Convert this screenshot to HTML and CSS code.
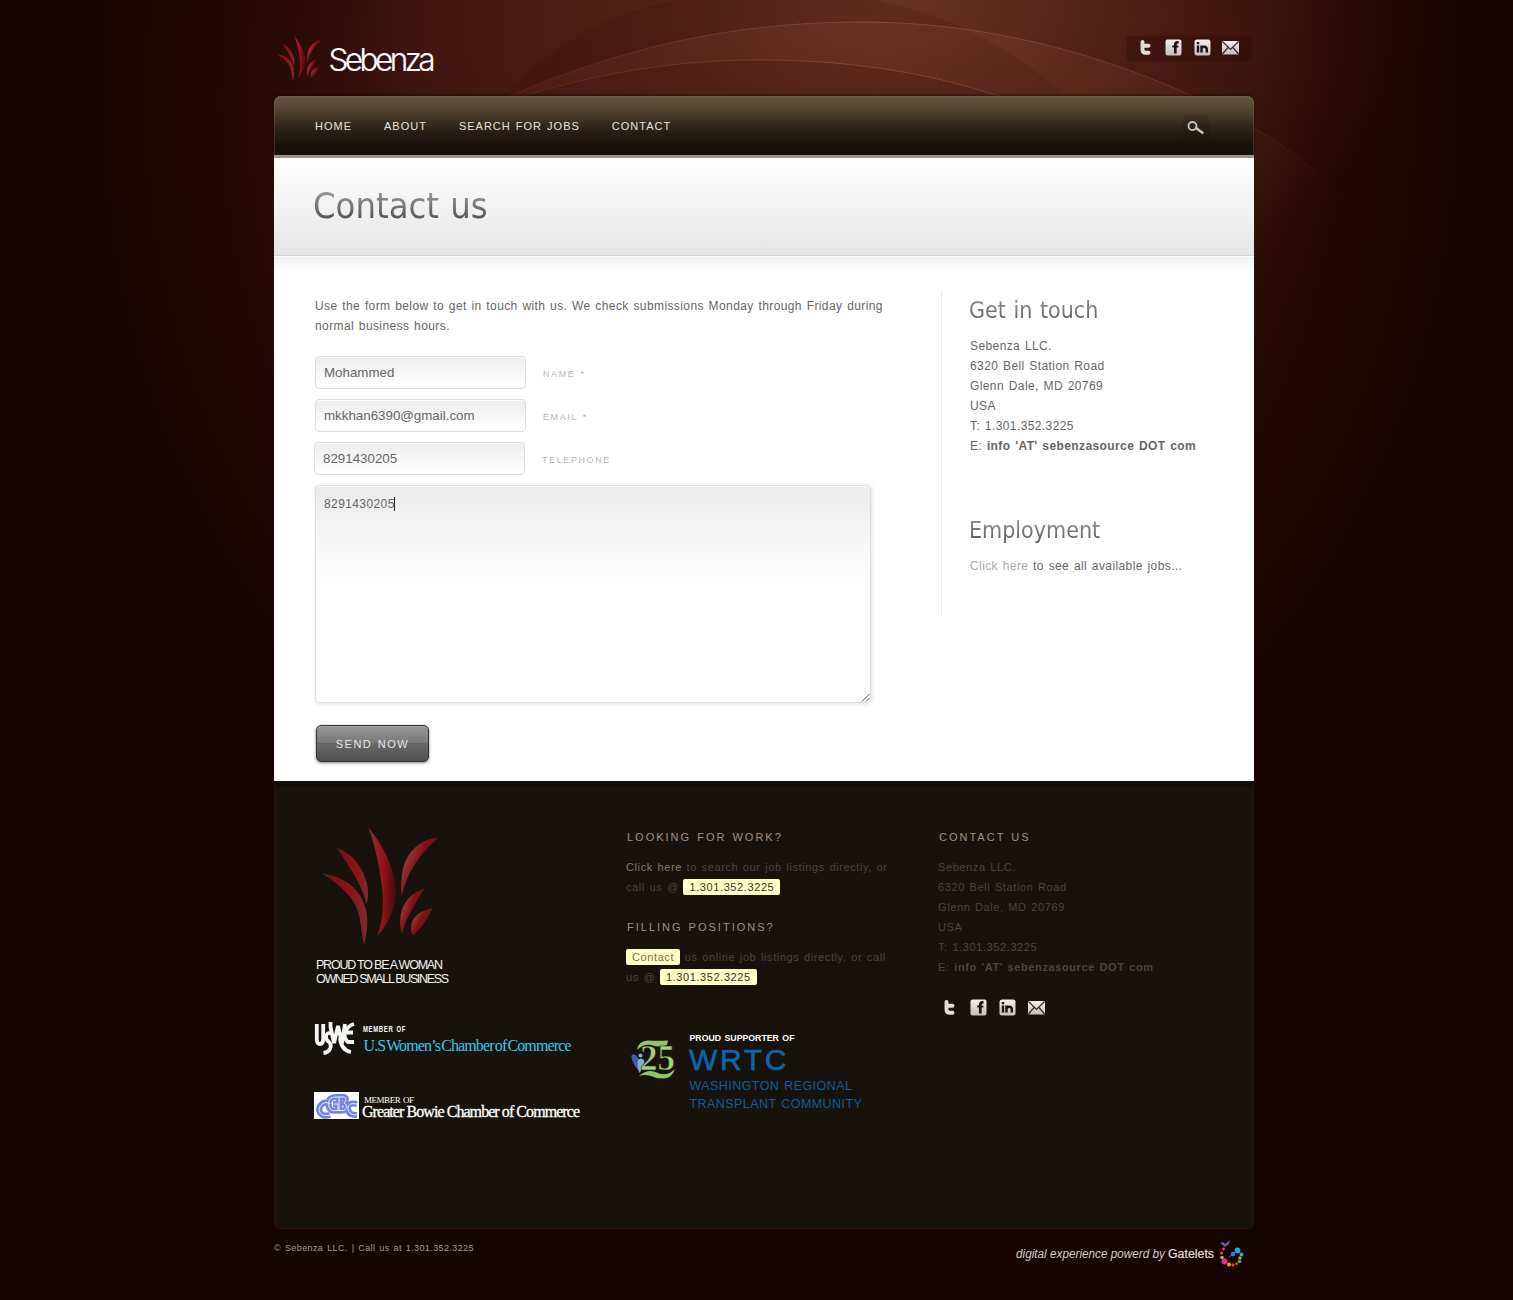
FILE: index.html
```html
<!DOCTYPE html>
<html lang="en">
<head>
<meta charset="utf-8">
<title>Contact us | Sebenza</title>
<link rel="stylesheet" href="styles.css">
</head>
<body>
<svg width="0" height="0" class="defs" aria-hidden="true">
  <defs>
    <linearGradient id="leafRed" x1="0" y1="0" x2="1" y2="0"><stop offset="0" stop-color="#6d1518"/><stop offset=".6" stop-color="#8c1216"/><stop offset="1" stop-color="#7d2a2e"/></linearGradient>
    <linearGradient id="leafBig" x1="0" y1="0" x2="1" y2=".1"><stop offset=".1" stop-color="#8d2a2e"/><stop offset=".6" stop-color="#941216"/><stop offset=".95" stop-color="#4d0e10"/></linearGradient>
    <linearGradient id="leafPale" x1="0" y1="0" x2="1" y2=".7"><stop offset=".15" stop-color="#a0484c"/><stop offset=".5" stop-color="#801115"/><stop offset="1" stop-color="#6c1013"/></linearGradient>
    <linearGradient id="metal" x1="0" y1="0" x2="0" y2="1"><stop offset="0" stop-color="#f4efee"/><stop offset="1" stop-color="#c6bebd"/></linearGradient>
    <symbol id="leaves" viewBox="60 30 360 362">
      <path fill="url(#leafRed)" d="M65 175C105 198 152 235 170 278C184 315 184 355 192 387C203 350 207 305 192 265C175 215 125 182 65 175Z"/>
      <path fill="url(#leafRed)" d="M110 97C155 115 183 150 196 190C206 215 206 245 200 267C184 205 148 155 110 97Z"/>
      <path fill="url(#leafBig)" d="M205 37C250 90 285 160 288 225C288 280 265 325 232 362C250 310 252 260 245 210C237 150 225 90 205 37Z"/>
      <path fill="url(#leafPale)" d="M415 68C370 70 330 100 312 150C303 180 302 215 305 245C318 180 355 118 415 68Z"/>
      <path fill="url(#leafPale)" d="M373 220C335 232 308 262 302 300C299 325 302 345 306 357C318 310 345 265 373 220Z"/>
      <path fill="url(#leafPale)" d="M397 280C360 285 338 305 334 330C332 345 335 352 338 360C360 345 380 315 397 280Z"/>
    </symbol>
    <symbol id="twitter" viewBox="0 0 17 17"><path d="M5.500 3V10.500Q5.500 13.800 9 13.800H11.500M6 6.800H11.500" fill="none" stroke="#e2dcdb" stroke-width="3.900" stroke-linecap="round" stroke-linejoin="round"/></symbol>
    <symbol id="facebook" viewBox="0 0 17 17"><rect x=".5" y=".5" width="16" height="16" rx="2" fill="url(#metal)"/><path d="M13.500 3.300H12.500Q10.300 3.300 10.300 6V14.500" fill="none" stroke="#21120f" stroke-width="2.700"/><path d="M7.300 7.500H13.300" stroke="#21120f" stroke-width="2"/></symbol>
    <symbol id="linkedin" viewBox="0 0 17 17"><rect x=".5" y=".5" width="16" height="16" rx="2.500" fill="url(#metal)"/><path d="M4 6.500V13.500M7.500 6.500V13.500M7.800 9.500Q8 7.700 10.200 7.700T12.800 10V13.500M4 3V5.300" fill="none" stroke="#21120f" stroke-width="2.400"/></symbol>
    <symbol id="mail" viewBox="0 0 17 17"><rect x="0" y="2" width="17" height="13.500" rx="1" fill="url(#metal)"/><path d="M.5 2.500L8.500 10.500L16.500 2.500M.5 15L6 8.500M16.500 15L11 8.500" fill="none" stroke="#3a2825" stroke-width="1.200"/></symbol>
  </defs>
</svg>

<svg class="backdrop" width="1513" height="900" viewBox="0 0 1513 900" aria-hidden="true">
  <defs>
    <radialGradient id="glow" cx="880" cy="20" r="500" gradientUnits="userSpaceOnUse"><stop offset="0" stop-color="#ff9c70" stop-opacity=".07"/><stop offset=".6" stop-color="#ff9c70" stop-opacity=".06"/><stop offset="1" stop-color="#ff8c60" stop-opacity="0"/></radialGradient>
    <linearGradient id="edge" x1="480" y1="0" x2="1370" y2="0" gradientUnits="userSpaceOnUse"><stop offset="0" stop-color="#c87858" stop-opacity=".1"/><stop offset=".45" stop-color="#c87858" stop-opacity=".36"/><stop offset=".8" stop-color="#c87858" stop-opacity=".22"/><stop offset="1" stop-color="#c87858" stop-opacity="0"/></linearGradient>
  </defs>
  <path fill="#2c0906" fill-opacity=".15" d="M490 110C560 30 650-10 770-10C900-10 1000 30 1080 110Z"/>
  <path fill="url(#glow)" d="M490 105C620 45 740 22 862 22C1010 22 1150 68 1254 128C1330 172 1400 250 1440 360V560H490Z"/>
  <path fill="none" stroke="url(#edge)" d="M490 105C620 45 740 22 862 22C1010 22 1150 68 1254 128C1330 172 1370 225 1400 270"/>
  <path fill="#2c0906" fill-opacity=".15" stroke="url(#edge)" d="M510 100C600 72 680 59 770 60C860 61 940 75 1010 100Z"/>
</svg>

<div class="page">
  <header class="top">
    <svg class="logo" width="180" height="56" viewBox="0 0 180 56" role="img" aria-label="Sebenza">
      <use href="#leaves" x="1" y="5" width="46" height="47"/>
      <text x="53.500" y="41" class="logo-text" textLength="107" lengthAdjust="spacing">Sebenza</text>
    </svg>
    <div class="social social-top">
      <svg><use href="#twitter"/></svg><svg><use href="#facebook"/></svg><svg><use href="#linkedin"/></svg><svg><use href="#mail"/></svg>
    </div>
  </header>

  <nav class="nav">
    <ul><li>HOME</li><li>ABOUT</li><li>SEARCH FOR JOBS</li><li>CONTACT</li></ul>
    <span class="search"><svg width="18" height="15" viewBox="0 0 18 15"><circle cx="5.500" cy="5" r="4" fill="none" stroke="#c9c4be" stroke-width="1.800"/><path d="M9 7L15.500 11.800" stroke="#c9c4be" stroke-width="2.600" stroke-linecap="round"/></svg></span>
  </nav>

  <div class="title"><h1>Contact us</h1></div>

  <main class="content">
    <section class="main">
      <p>Use the form below to get in touch with us. We check submissions Monday through Friday during normal business hours.</p>
      <form>
        <div class="row"><input type="text" value="Mohammed"><label>NAME *</label></div>
        <div class="row"><input type="text" value="mkkhan6390@gmail.com"><label>EMAIL *</label></div>
        <div class="row shifted"><input type="text" value="8291430205"><label>TELEPHONE</label></div>
        <div class="message" role="textbox"><span class="typed">8291430205</span><svg class="grip" width="9" height="9" viewBox="0 0 9 9"><path d="M1 8.500L8.500 1M5 8.500L8.500 5" stroke="#555" fill="none"/></svg></div>
        <button type="button">SEND NOW</button>
      </form>
    </section>
    <aside class="side">
      <h2>Get in touch</h2>
      <p>Sebenza LLC.<br>6320 Bell Station Road<br>Glenn Dale, MD 20769<br>USA<br>T: 1.301.352.3225<br>E: <b>info 'AT' sebenzasource DOT com</b></p>
      <h2 class="second">Employment</h2>
      <p><span class="pale">Click here</span> to see all available jobs...</p>
    </aside>
  </main>

  <footer class="footer">
    <div class="badges">
      <svg width="140" height="170" viewBox="0 0 140 170">
        <use href="#leaves" x="6" y="5" width="120" height="121"/>
        <text x="2" y="149" class="proud" textLength="127">PROUD TO BE A WOMAN</text>
        <text x="2" y="163" class="proud" textLength="133">OWNED SMALL BUSINESS</text>
      </svg>
      <svg width="262" height="40" viewBox="0 0 262 40">
        <g fill="none" stroke="#f5f5f5" stroke-width="3.800">
          <path d="M2.800 6V21Q2.800 26 6 26T9.200 21V6"/>
          <path d="M18.500 15Q12 14 12 19Q12 22 15 24Q18 27 16 31Q14 34.500 9.500 35"/>
          <path d="M16.500 4V9L20 25L24 8L28 25L31 6"/>
          <path d="M40 6Q33 8 31 15Q30 21 34 24H40M33 14.500H39M26 20Q27 32 37 34"/>
        </g>
        <text x="49" y="14" class="member-sans" textLength="43" lengthAdjust="spacingAndGlyphs">MEMBER OF</text>
        <text x="49.500" y="33" class="women" textLength="208" lengthAdjust="spacing">U.S Women’s Chamber of Commerce</text>
      </svg>
      <svg width="270" height="32" viewBox="0 0 270 32">
        <rect x="0" y="2" width="45" height="27" fill="#fff"/>
        <g fill="none" stroke="#7285e4" stroke-width="6">
          <path d="M16 13.500Q12 11 8 14Q3.500 18 6 22.500T16 25"/>
          <path d="M25 7Q14 6 14.500 14T22 20.500H24V14H19"/>
          <path d="M25 20V7H30Q34 9 30 13Q36 17 30 20.500H23"/>
          <path d="M43 14Q34 12 34 18.500T43 25"/>
        </g>
        <path fill="none" stroke="#e6eaff" stroke-width="1" d="M16 13.500Q12 11 8 14Q3.500 18 6 22.500T16 25M25 7Q14 6 14.500 14T22 20.500H24V14H19M25 20V7H30Q34 9 30 13Q36 17 30 20.500H23M43 14Q34 12 34 18.500T43 25"/>
        <text x="50" y="12.500" class="member-serif" textLength="50">MEMBER OF</text>
        <text x="48" y="27" class="bowie" textLength="218">Greater Bowie Chamber of Commerce</text>
      </svg>
    </div>

    <div class="jobs">
      <h3>LOOKING FOR WORK?</h3>
      <p><span class="link">Click here</span> to search our job listings directly, or call us @ <mark>1.301.352.3225</mark></p>
      <h3>FILLING POSITIONS?</h3>
      <p><mark class="soft">Contact</mark> us online job listings directly, or call us @ <mark>1.301.352.3225</mark></p>
      <svg class="wrtc" width="250" height="90" viewBox="0 0 250 90">
        <g transform="translate(0 2)">
          <path d="M6 27Q4 22 8 22.500Q11 23 14 29L13 39Q7 33 6 27Z" fill="#3d5ea8"/>
          <path d="M12 28Q15 25 18 28Q20 32 13.500 41Q10.500 34 12 28Z" fill="#84a9dd"/><circle cx="14.500" cy="23.500" r="2" fill="#84a9dd"/>
          <path d="M11 18Q12 9 22 8.500Q32 9 42 8.500L41 13Q34 16 25 13Q17 12 11 18Z" fill="#92c365"/>
          <path d="M13 44Q22 36 32 41Q41 45 49 37Q46 46.500 37 46.500Q30 46.500 25 44Q18 42 13 44Z" fill="#92c365"/>
          <text x="14" y="38" class="twenty-five" textLength="35" lengthAdjust="spacingAndGlyphs">25</text>
        </g>
        <text x="63.500" y="11" class="supporter" textLength="105" lengthAdjust="spacingAndGlyphs">PROUD SUPPORTER OF</text>
        <text x="63" y="40" class="wrtc-name" textLength="98">WRTC</text>
        <text x="63.500" y="60" class="wrtc-sub" textLength="163">WASHINGTON REGIONAL</text>
        <text x="63.500" y="78" class="wrtc-sub" textLength="173">TRANSPLANT COMMUNITY</text>
      </svg>
    </div>

    <div class="reach">
      <h3>CONTACT US</h3>
      <p>Sebenza LLC.<br>6320 Bell Station Road<br>Glenn Dale, MD 20769<br>USA<br>T: 1.301.352.3225<br>E: <b>info 'AT' sebenzasource DOT com</b></p>
      <div class="social">
        <svg><use href="#twitter"/></svg><svg><use href="#facebook"/></svg><svg><use href="#linkedin"/></svg><svg><use href="#mail"/></svg>
      </div>
    </div>
  </footer>

  <div class="bottom">
    <span>© Sebenza LLC. | Call us at 1.301.352.3225</span>
    <svg width="240" height="32" viewBox="0 0 240 32">
      <text x="2" y="20" class="credit" textLength="149" lengthAdjust="spacingAndGlyphs">digital experience powerd by</text>
      <text x="154" y="20" class="credit-name" textLength="46" lengthAdjust="spacingAndGlyphs">Gatelets</text>
      <path d="M206 5L209 4L211 6L216 2L215 6L211 9Z" fill="#7656a0"/>
      <circle cx="209.500" cy="11" r="1.400" fill="#e0475a"/><circle cx="207.500" cy="15" r="1.600" fill="#d8434a"/><circle cx="208" cy="19.500" r="1.800" fill="#e8a33b"/><circle cx="210.500" cy="23.500" r="2.900" fill="#ec2a8b"/><circle cx="215" cy="26.500" r="2.100" fill="#ee8b35"/><circle cx="219" cy="26.800" r="1.600" fill="#e53a30"/><circle cx="222.500" cy="25.500" r="1.500" fill="#e0392e"/><circle cx="225.500" cy="23.500" r="1.700" fill="#53b748"/><circle cx="226" cy="20" r="1.700" fill="#7cc142"/><circle cx="227.500" cy="16.500" r="1.900" fill="#3faf8c"/><circle cx="223.500" cy="12.500" r="2.900" fill="#1ba7df"/><circle cx="219" cy="16" r="2.200" fill="#2284cf"/><path d="M215 19L219 16L223 13" stroke="#2284cf" fill="none"/>
    </svg>
  </div>
</div>
</body>
</html>
```
FILE: styles.css
```css
* { box-sizing: border-box; }
body {
  margin: 0;
  min-height: 1300px;
  position: relative;
  overflow-x: hidden;
  font: 12px/20px "Liberation Sans", Arial, sans-serif;
  letter-spacing: 0.4px;
  word-spacing: 1px;
  color: #666;
  background:
    radial-gradient(ellipse 540px 330px at 890px 0, rgba(116, 60, 44, 0.75), rgba(90, 38, 26, 0.5) 50%, transparent),
    radial-gradient(ellipse 690px 800px at 780px 100px, #4a1911 0, #3e130d 50%, #230804 80%, transparent 100%),
    #170402;
}
h1, h2, h3, p, ul, form { margin: 0; padding: 0; }
.defs, .backdrop { position: absolute; top: 0; left: 0; }
.page { position: relative; width: 980px; margin-left: 274px; }

.top { height: 96px; display: flex; justify-content: space-between; align-items: flex-start; padding: 30px 3px 0 1px; }
.logo-text { font: 300 31.500px Inter, sans-serif; letter-spacing: 0; fill: #fff; stroke: #fff; stroke-width: 0.2px; }
.social { display: flex; gap: 11.5px; align-items: center; }
.social svg { width: 17px; height: 17px; }
.social-top { margin-top: 6px; height: 25px; padding: 0 12px 2px 10px; background: rgba(35, 5, 4, 0.3); border-radius: 3px; box-shadow: 0 0 2px rgba(35, 5, 4, 0.3); }

.nav {
  height: 62px;
  padding: 0 40px 0 41px;
  display: flex;
  justify-content: space-between;
  background: linear-gradient(#65533f 0, #554633 12px, #2b2218 33px, #17110b 50px, #15110b);
  border-radius: 7px 7px 0 0;
  border-bottom: 3px solid #a29488;
  box-shadow: 0 -1px 3px rgba(0, 0, 0, 0.5), inset 1px 0 rgba(145, 120, 90, 0.3), inset -1px 0 rgba(145, 120, 90, 0.3), inset 0 1px #6b5945;
}
.nav ul { display: flex; gap: 32px; list-style: none; font-size: 11px; line-height: 60px; letter-spacing: 1px; color: #e8e4dd; }
.search { width: 26px; height: 26px; margin: 19px 5px 0 0; display: flex; align-items: center; justify-content: center; background: rgba(20, 14, 8, 0.15); border-radius: 3px; }

.title { height: 98px; padding: 26px 39px; background: linear-gradient(#fff, #e5e5e5); border-bottom: 1px solid #d5d5d5; }
h1, h2 { font-family: "DejaVu Sans Condensed", "DejaVu Sans", sans-serif; font-stretch: condensed; font-weight: normal; letter-spacing: 0; color: transparent; background: linear-gradient(#999, #555); -webkit-background-clip: text; background-clip: text; }
h1 { font-size: 36px; line-height: 43px; background-image: linear-gradient(#a0a0a0 10%, #4c4c4c 90%); }
h2 { font-size: 23px; line-height: 30px; margin-left: -1px; }

.content { height: 525px; padding: 34px 41px 0; display: flex; background: linear-gradient(#fff 1px, #f3f3f3 1px, #fff 15px); }
.main { width: 626px; padding-top: 6px; }
.main p { width: 580px; margin-bottom: 20px; }
.row { display: flex; height: 33px; margin-bottom: 10px; }
.shifted { margin-left: -1px; }
input { width: 211px; height: 33px; padding: 0 8px; border: 1px solid #ddd; border-radius: 4px; background: linear-gradient(#ececec, #fff 28px); box-shadow: inset 0 1px #fff; font: 13.333px "Liberation Sans", Arial, sans-serif; color: #666; outline: 0; }
label { margin-left: 17px; line-height: 36px; font-size: 9px; letter-spacing: 1.6px; color: #b5b5b5; }
.message { position: relative; width: 556px; height: 218px; padding: 8px; border: 1px solid #ddd; border-radius: 4px; background: linear-gradient(#ebebeb, #fff 100px); box-shadow: inset 0 1px #fff, 1px 1px 4px rgba(0, 0, 0, 0.13); }
.typed { display: inline-block; width: 71px; height: 14px; line-height: 14px; border-right: 1px solid #222; }
.grip { position: absolute; right: 0; bottom: 0; }
button { display: block; width: 113px; height: 37px; margin: 22px 0 0 1px; padding: 0; border: 1px solid #333; border-radius: 5px; background: linear-gradient(#969696, #777 50%, #686868 50%, #505050); box-shadow: inset 0 1px #aaa, 0 1px 3px rgba(0, 0, 0, 0.5); font: 11px "Liberation Sans", Arial, sans-serif; letter-spacing: 1.5px; word-spacing: 1px; color: #e8e8e8; }

.side { width: 272px; height: 326px; padding: 5px 0 0 28px; border-left: 1px solid #e9e9e9; }
.side h2 { margin-bottom: 11px; }
.side .second { margin-top: 59px; }
.pale { color: #aaa; }

.footer { height: 448px; padding: 39px 40px 0 39px; display: grid; grid-template-columns: 312px 312px 1fr; background: #17120c; border: 1px solid #201a13; border-top: 6px solid #120d08; border-radius: 0 0 6px 6px; color: #50443a; font-size: 11px; letter-spacing: 0.6px; }
.badges { display: flex; flex-direction: column; margin-top: -6px; gap: 28px; }
.badges svg { display: block; }
.badges svg + svg + svg { margin-top: 4px; }
h3 { margin: 1px 0 10px 1px; font: 11px/20px "Liberation Sans", Arial, sans-serif; letter-spacing: 2px; color: #a3937f; }
.jobs p { width: 270px; margin-bottom: 20px; }
.link { color: #877c73; }
mark { background: #ffffc4; color: #38332a; padding: 2px 6px; border-radius: 2px; }
mark.soft { color: #77705c; }
.wrtc { display: block; margin-top: 43px; }
.reach .social { margin: 22px 0 0 3px; gap: 12px; }

.proud { font: 12.500px "Liberation Sans", Arial, sans-serif; fill: #f3f3f3; letter-spacing: 0; word-spacing: 0; }
.member-sans { font: bold 9px "Liberation Sans", Arial, sans-serif; letter-spacing: 1px; fill: #fff; }
.women { font: 16px "Liberation Serif", serif; fill: #3cc4ea; letter-spacing: 0; word-spacing: -2px; }
.member-serif { font: 9px "Liberation Serif", serif; fill: #fff; letter-spacing: 0; }
.bowie { font: 16px "Liberation Serif", serif; fill: #fff; stroke: #fff; stroke-width: 0.3px; letter-spacing: 0; word-spacing: 0; }
.twenty-five { font: bold 35px "Liberation Serif", serif; fill: #a4d17a; stroke: #17120c; stroke-width: 0.6px; letter-spacing: 0; }
.supporter { font: bold 8.500px "Liberation Sans", Arial, sans-serif; fill: #fff; letter-spacing: 0; }
.wrtc-name { font: 30px "Liberation Sans", Arial, sans-serif; fill: #0f65ac; stroke: #0f65ac; stroke-width: 0.6px; }
.wrtc-sub { font: 12.500px "Liberation Sans", Arial, sans-serif; fill: #0f5d9d; }

.bottom { display: flex; justify-content: space-between; padding: 9px 0 0; font-size: 9px; color: #a39a96; }
.bottom svg { letter-spacing: 0; word-spacing: 0; }
.credit { font: italic 12px "Liberation Sans", Arial, sans-serif; fill: #d5cbc9; }
.credit-name { font: 12px "Liberation Sans", Arial, sans-serif; fill: #e5dddb; stroke: #e5dddb; stroke-width: 0.2px; }
```
